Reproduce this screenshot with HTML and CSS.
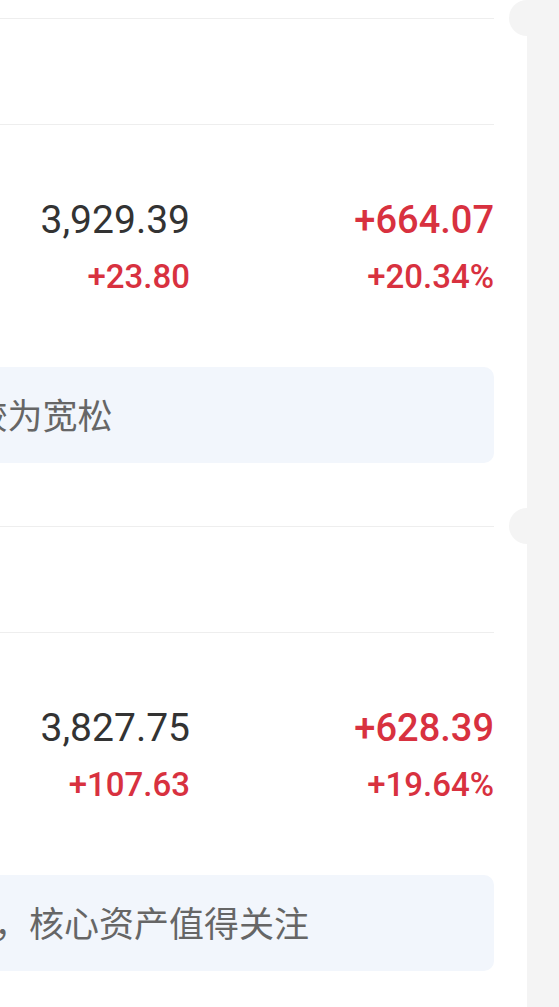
FILE: index.html
```html
<!DOCTYPE html>
<html lang="zh-CN">
<head>
  <meta charset="UTF-8">
  <title>指数周报</title>
  <link rel="stylesheet" href="styles.css">
</head>
<body>
  <div class="card">
    <!-- 上证指数 -->
    <div class="section">
      <div class="section-head"></div>
      <div class="row">
        <div class="label"></div>
        <div class="col">
          <div class="price">3,929.39</div>
          <div class="diff red">+23.80</div>
        </div>
        <div class="col">
          <div class="total red">+664.07</div>
          <div class="diff red">+20.34%</div>
        </div>
      </div>
      <div class="tip">降息0.5后资金面较为宽松</div>
    </div>

    <!-- 沪深300 -->
    <div class="section">
      <div class="section-head"></div>
      <div class="row">
        <div class="label"></div>
        <div class="col">
          <div class="price">3,827.75</div>
          <div class="diff red">+107.63</div>
        </div>
        <div class="col">
          <div class="total red">+628.39</div>
          <div class="diff red">+19.64%</div>
        </div>
      </div>
      <div class="tip">外资持续流入蓝筹，核心资产值得关注</div>
    </div>
  </div>
</body>
</html>
```

FILE: styles.css
```css
body {
  margin: 0;
  background: #f4f4f4;
  font-family: 'Roboto', 'Noto Sans CJK SC', sans-serif;
  color: #333;
  overflow: hidden;
}

.card {
  box-sizing: border-box;
  width: 870px;
  margin-left: -343px;
  padding: 18px 33px 0;
  background: #fff;
  min-height: 1100px;
}

.section {
  position: relative;
  border-top: 1px solid #eeeeee;
  padding-bottom: 63px;
}

/* ticket notch on the right edge */
.section::after {
  content: "";
  position: absolute;
  top: -19px;
  right: -51px;
  width: 36px;
  height: 36px;
  border-radius: 50%;
  background: #f4f4f4;
}

.section-head {
  height: 105px;
  border-bottom: 1px solid #eeeeee;
}

.row {
  display: grid;
  grid-template-columns: 1fr 200px 304px;
  padding: 69px 0 68px;
}

.col {
  text-align: right;
}

.price, .total {
  font-size: 38px;
  line-height: 52px;
}

.price {
  font-size: 39px;
}

.total {
  font-weight: 500;
}

.diff {
  margin-top: 9px;
  font-size: 33px;
  line-height: 44px;
  font-weight: 500;
}

.red {
  color: #d8313f;
}

.tip {
  background: #f2f6fc;
  border-radius: 10px;
  padding: 29px 24px 23px;
  font-size: 35px;
  line-height: 44px;
  color: #666;
  white-space: nowrap;
}
```
